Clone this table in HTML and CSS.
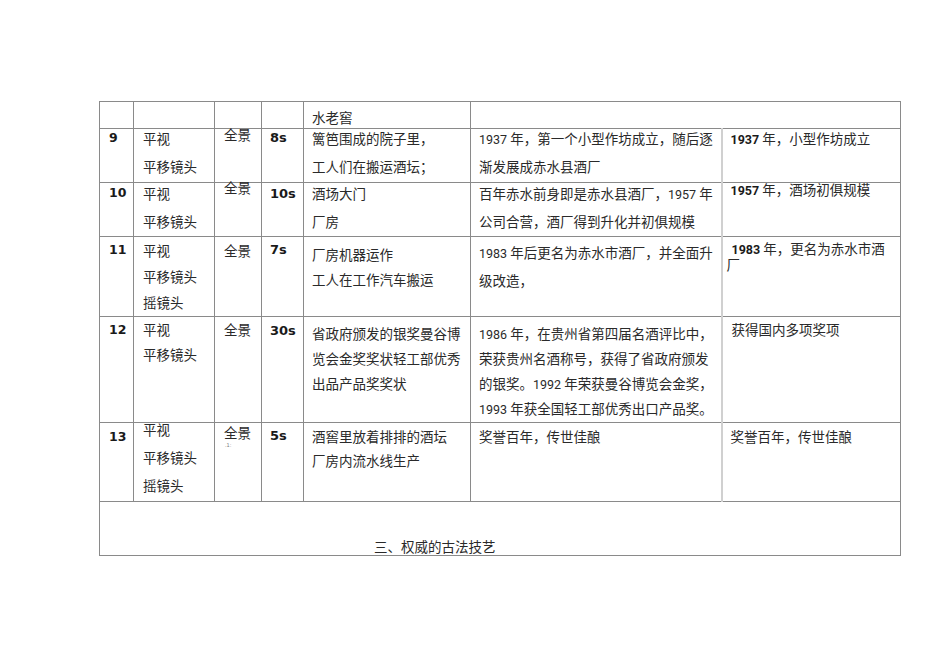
FILE: index.html
```html
<!DOCTYPE html>
<html lang="zh-CN">
<head>
<meta charset="utf-8">
<title>分镜头脚本</title>
<link rel="stylesheet" href="styles.css">
</head>
<body>
<div class="page">
<table class="shots">
<colgroup>
<col class="w-num"><col class="w-move"><col class="w-shot"><col class="w-dur"><col class="w-desc"><col class="w-voice"><col class="w-note">
</colgroup>
<tr class="r0">
<td class="num"></td><td class="move"></td><td class="shot"></td><td class="dur"></td>
<td class="desc"><div class="t">水老窖</div></td>
<td class="voice" colspan="2"></td>
</tr>
<tr class="r9">
<td class="num"><div class="t">9</div></td>
<td class="move"><div class="t">平视<br>平移镜头</div></td>
<td class="shot"><div class="t">全景</div></td>
<td class="dur"><div class="t">8s</div></td>
<td class="desc"><div class="t">篱笆围成的院子里，<br>工人们在搬运酒坛；</div></td>
<td class="voice"><div class="t"><span class="yr">1937</span> 年，第一个小型作坊成立，随后逐<br>渐发展成赤水县酒厂</div></td>
<td class="note"><div class="t"><b class="yrb">1937</b> 年，小型作坊成立</div></td>
</tr>
<tr class="r10">
<td class="num"><div class="t">10</div></td>
<td class="move"><div class="t">平视<br>平移镜头</div></td>
<td class="shot"><div class="t">全景</div></td>
<td class="dur"><div class="t">10s</div></td>
<td class="desc"><div class="t">酒场大门<br>厂房</div></td>
<td class="voice"><div class="t">百年赤水前身即是赤水县酒厂，<span class="yr">1957</span> 年<br>公司合营，酒厂得到升化并初俱规模</div></td>
<td class="note"><div class="t"><b class="yrb">1957</b> 年，酒场初俱规模</div></td>
</tr>
<tr class="r11">
<td class="num"><div class="t">11</div></td>
<td class="move"><div class="t">平视<br>平移镜头<br>摇镜头</div></td>
<td class="shot"><div class="t">全景</div></td>
<td class="dur"><div class="t">7s</div></td>
<td class="desc"><div class="t">厂房机器运作<br>工人在工作汽车搬运</div></td>
<td class="voice"><div class="t"><span class="yr">1983</span> 年后更名为赤水市酒厂，并全面升<br>级改造，</div></td>
<td class="note"><div class="t"><b class="yrb">1983</b> 年，更名为赤水市酒<br>厂</div></td>
</tr>
<tr class="r12">
<td class="num"><div class="t">12</div></td>
<td class="move"><div class="t">平视<br>平移镜头</div></td>
<td class="shot"><div class="t">全景</div></td>
<td class="dur"><div class="t">30s</div></td>
<td class="desc"><div class="t">省政府颁发的银奖曼谷博<br>览会金奖奖状轻工部优秀<br>出品产品奖奖状</div></td>
<td class="voice"><div class="t"><span class="yr">1986</span> 年，在贵州省第四届名酒评比中，<br>荣获贵州名酒称号，获得了省政府颁发<br>的银奖。<span class="yr">1992</span> 年荣获曼谷博览会金奖，<br><span class="yr">1993</span> 年获全国轻工部优秀出口产品奖。</div></td>
<td class="note"><div class="t">获得国内多项奖项</div></td>
</tr>
<tr class="r13">
<td class="num"><div class="t">13</div></td>
<td class="move"><div class="t">平视<br>平移镜头<br>摇镜头</div></td>
<td class="shot"><div class="t">全景</div><div class="mark">.1:</div></td>
<td class="dur"><div class="t">5s</div></td>
<td class="desc"><div class="t">酒窖里放着排排的酒坛<br>厂房内流水线生产</div></td>
<td class="voice"><div class="t">奖誉百年，传世佳酿</div></td>
<td class="note"><div class="t">奖誉百年，传世佳酿</div></td>
</tr>
<tr class="rlast">
<td class="section" colspan="7"><div class="t">三、权威的古法技艺</div></td>
</tr>
</table>
</div>
</body>
</html>
```
FILE: styles.css
```css
html, body {
  margin: 0;
  padding: 0;
  background: #ffffff;
}
body {
  font-family: "Noto Sans CJK SC", "Noto Sans CJK JP", sans-serif;
  font-size: 13.5px;
  color: #2a2a2a;
}
.page {
  padding: 101px 0 0 99px;
}
.shots {
  border-collapse: collapse;
  table-layout: fixed;
  width: 801px;
}
.w-num { width: 34px; }
.w-move { width: 81px; }
.w-shot { width: 47px; }
.w-dur { width: 42px; }
.w-desc { width: 167px; }
.w-voice { width: 251px; }
.w-note { width: 179px; }

.shots td {
  border: 1px solid #8a8a8a;
  padding: 0;
  vertical-align: top;
  white-space: nowrap;
  overflow: visible;
}
.shots td.note {
  border-left: 2px solid #d0d0d0;
}
.t { line-height: 26px; }

.num { padding-left: 9px !important; }
.move { padding-left: 9px !important; }
.shot { padding-left: 9px !important; }
.dur { padding-left: 8px !important; }
.desc { padding-left: 8px !important; }
.voice { padding-left: 8px !important; }
.note { padding-left: 8px !important; }

.num .t, .dur .t {
  font-family: "DejaVu Sans", sans-serif;
  font-weight: bold;
  color: #1a1a1a;
}
.num .t { font-size: 12.5px; }
.dur .t { font-size: 13px; }
.yr {
  font-family: "Roboto", "Liberation Sans", sans-serif;
  font-size: 12.5px;
  line-height: 1;
}
.yrb {
  font-family: "Roboto", "Liberation Sans", sans-serif;
  font-weight: bold;
  font-size: 12.5px;
  line-height: 1;
  color: #1a1a1a;
}
.mark {
  font-family: "DejaVu Sans", sans-serif;
  font-size: 5px;
  line-height: 6px;
  color: #777;
  margin-top: 2px;
  margin-left: 1px;
}

/* row heights */
.r0 { height: 27px; }
.r9 { height: 54px; }
.r10 { height: 54px; }
.r11 { height: 80px; }
.r12 { height: 106px; }
.r13 { height: 79px; }
.rlast { height: 54px; }

/* vertical placement of the text inside each row */
.r0 .t { line-height: 20px; margin-top: 5px; }

.r9 .t { line-height: 28px; margin-top: -5px; }
.r9 .shot .t { margin-top: -9px; }

.r10 .t { line-height: 28px; margin-top: -4px; }
.r10 .shot .t { margin-top: -10px; }
.r10 .note .t { margin-top: -8px; }
.r10 .dur .t { margin-top: -3px; }

.r11 .t { margin-top: 0; }
.r11 .desc .t { line-height: 25px; margin-top: 5px; }
.r11 .voice .t { line-height: 28px; margin-top: 1px; }
.r11 .note .t { line-height: 14px; margin-top: 4px; text-indent: 5px; }
.r11 .note { padding-left: 4px !important; }

.r12 .t { line-height: 25px; margin-top: 0; }
.r12 .dur .t { margin-top: 1px; }
.r12 .desc .t { margin-top: 4px; }
.r12 .voice .t { margin-top: 4px; }
.r12 .note { padding-left: 9px !important; }

.r13 .t { margin-top: 0; }
.r13 .num .t { margin-top: 1px; }
.r13 .move .t { line-height: 28px; margin-top: -8px; }
.r13 .shot .t { line-height: 16px; margin-top: 1px; }
.r13 .desc .t { line-height: 24px; margin-top: 1px; }

.section {
  padding-left: 274px !important;
}
.section .t {
  line-height: 16px;
  margin-top: 36px;
}
```
